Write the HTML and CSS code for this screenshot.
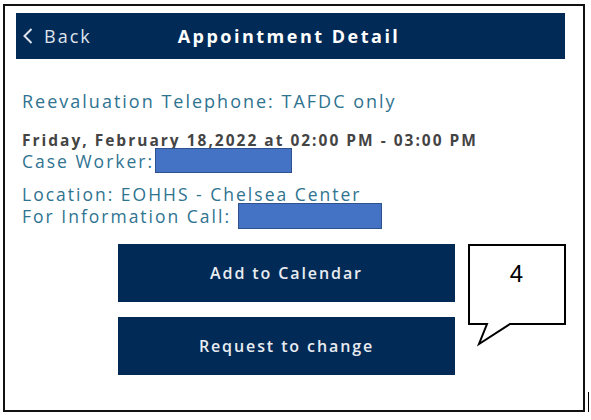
FILE: index.html
```html
<!DOCTYPE html>
<html lang="en">
<head>
  <meta charset="utf-8">
  <title>Appointment Detail</title>
  <link rel="stylesheet" href="styles.css">
</head>
<body>
  <div class="frame">
    <header class="topbar">
      <a class="back" href="#">
        <svg width="10" height="16" viewBox="0 0 10 16"><path d="M8.5 1 L1.5 8 L8.5 15" fill="none" stroke="#dfe4ec" stroke-width="2"/></svg>
        Back
      </a>
      <h1>Appointment Detail</h1>
      <span></span>
    </header>

    <section class="details">
      <p class="type">Reevaluation Telephone: TAFDC only</p>
      <p class="when">Friday, February 18,2022 at 02:00 PM - 03:00 PM</p>
      <p class="info">Case Worker:<span class="hidden-field worker"></span></p>
      <p class="info location">Location: EOHHS - Chelsea Center</p>
      <p class="info">For Information Call: <span class="hidden-field phone"></span></p>
    </section>

    <div class="actions">
      <button type="button">Add to Calendar</button>
      <button type="button">Request to change</button>
    </div>

    <!-- numbered note -->
    <div class="callout">
      <svg width="100" height="104" viewBox="0 0 100 104">
        <path d="M1 1 H97 V80 H42 L11 100 L19 80 H1 Z" fill="#fff" stroke="#000" stroke-width="2"/>
      </svg>
      <span>4</span>
    </div>
    <span class="tick"></span>
  </div>
</body>
</html>
```

FILE: styles.css
```css
body {
  margin: 0;
  background-color: #fff;
  font-family: "Open Sans", "Noto Sans", sans-serif;
  letter-spacing: 2px;
}
.frame {
  position: relative;
  margin: 4px 0 0 3px;
  border: 2px solid #111;
  padding: 7px 18px 0 11px;
  width: 549px;
  height: 397px;
}
.topbar {
  display: grid;
  grid-template-columns: 1fr auto 1fr;
  align-items: center;
  height: 46px;
  padding-left: 7px;
  background-color: #022a57;
}
.back {
  display: flex;
  align-items: center;
  gap: 11px;
  color: #dfe4ec;
  font-size: 18px;
  text-decoration: none;
}
.topbar h1 {
  margin: 0 0 0 -10px;
  color: #fff;
  font-size: 18px;
  font-weight: 700;
  letter-spacing: 2.5px;
}
.details {
  padding: 30px 0 0 6px;
}
.details p {
  margin: 0;
}
.type {
  color: #2f7390;
  font-size: 18px;
  margin-bottom: 18px !important;
}
.when {
  color: #444;
  font-size: 15.5px;
  font-weight: 700;
  line-height: 19px;
}
.info {
  color: #2f7390;
  font-size: 17.5px;
  line-height: 22px;
}
.location {
  margin-top: 10px !important;
}
.hidden-field {
  display: inline-block;
  vertical-align: top;
  background-color: #4472c4;
  border: 1px solid #2f528f;
}
.worker {
  width: 135px;
  height: 23px;
  margin: -2px 0 0 1px;
}
.phone {
  width: 142px;
  height: 24px;
  margin-top: -2px;
}
.actions {
  display: flex;
  flex-direction: column;
  gap: 15px;
  margin-top: 15px;
  padding-left: 102px;
}
.actions button {
  width: 337px;
  height: 58px;
  border: none;
  background-color: #022a57;
  color: #e8ecf1;
  font-family: inherit;
  font-size: 16px;
  font-weight: 600;
  letter-spacing: 1.9px;
}
.callout {
  position: absolute;
  left: 463px;
  top: 238px;
  width: 100px;
  height: 104px;
}
.callout svg {
  display: block;
}
.callout span {
  position: absolute;
  left: 0;
  top: 18px;
  width: 97px;
  text-align: center;
  font-family: "Liberation Sans", sans-serif;
  font-size: 24px;
  line-height: 24px;
  letter-spacing: 0;
}
.tick {
  position: absolute;
  right: -6px;
  bottom: -2px;
  width: 1px;
  height: 20px;
  background-color: #000;
}
```
